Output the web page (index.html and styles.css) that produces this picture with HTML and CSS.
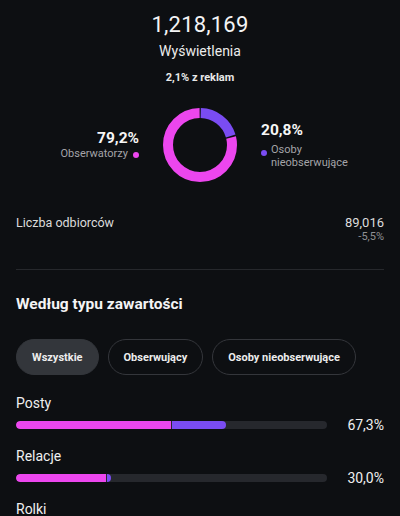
FILE: index.html
```html
<!DOCTYPE html>
<html lang="pl">
<head>
<meta charset="utf-8">
<link rel="stylesheet" href="styles.css">
</head>
<body>
<main class="page">
  <section class="summary">
    <div class="total">1,218,169</div>
    <div class="total-label">Wyświetlenia</div>
    <div class="ads">2,1% z reklam</div>
  </section>

  <section class="donut-row">
    <div class="legend legend-left">
      <div class="pct">79,2%</div>
      <div class="legend-line"><span>Obserwatorzy</span><i class="dot dot-pink"></i></div>
    </div>
    <svg class="donut" width="74" height="74" viewBox="0 0 74 74">
      <g transform="rotate(-90 37 37)">
        <circle cx="37" cy="37" r="32" fill="none" stroke="#7a4cf2" stroke-width="10" stroke-dasharray="40.3 300" stroke-dashoffset="-0.75"/>
        <circle cx="37" cy="37" r="32" fill="none" stroke="#ec46ee" stroke-width="10" stroke-dasharray="157.8 300" stroke-dashoffset="-42.55"/>
      </g>
    </svg>
    <div class="legend legend-right">
      <div class="pct">20,8%</div>
      <div class="legend-line legend-line-right"><i class="dot dot-purple"></i><span>Osoby<br>nieobserwujące</span></div>
    </div>
  </section>

  <section class="audience">
    <div class="audience-label">Liczba odbiorców</div>
    <div class="audience-values">
      <div class="audience-num">89,016</div>
      <div class="audience-change">-5,5%</div>
    </div>
  </section>

  <hr class="divider">

  <h2 class="heading">Według typu zawartości</h2>

  <div class="pills">
    <button class="pill pill-active">Wszystkie</button>
    <button class="pill">Obserwujący</button>
    <button class="pill">Osoby nieobserwujące</button>
  </div>

  <div class="metric">
    <div class="metric-label">Posty</div>
    <div class="metric-row">
      <div class="track">
        <span class="seg seg-pink" style="width:49.8%"></span>
        <span class="seg seg-purple" style="width:17.5%"></span>
      </div>
      <div class="metric-pct">67,3%</div>
    </div>
  </div>

  <div class="metric">
    <div class="metric-label">Relacje</div>
    <div class="metric-row">
      <div class="track">
        <span class="seg seg-pink" style="width:29%"></span>
        <span class="seg seg-purple" style="width:1.2%"></span>
      </div>
      <div class="metric-pct">30,0%</div>
    </div>
  </div>

  <div class="metric">
    <div class="metric-label">Rolki</div>
  </div>
</main>
</body>
</html>
```

FILE: styles.css
```css
* { box-sizing: border-box; }
html, body {
  margin: 0;
  padding: 0;
  background: #0d0f12;
  height: 100%;
  overflow: hidden;
}
body {
  font-family: Roboto, "Noto Sans", "Liberation Sans", sans-serif;
  color: #f4f4f5;
}
.page {
  padding: 0 16px;
}
.summary {
  display: flex;
  flex-direction: column;
  align-items: center;
  padding-top: 10px;
}
.total {
  font-size: 22px;
  line-height: 30px;
  font-weight: 400;
  letter-spacing: 0.2px;
}
.total-label {
  margin-top: 2px;
  font-size: 14px;
  line-height: 18px;
  color: #ececec;
}
.ads {
  margin-top: 10px;
  font-size: 11px;
  line-height: 16px;
  font-weight: 700;
  color: #e8e8e8;
}
.donut-row {
  margin-top: 22px;
  display: flex;
  justify-content: center;
  align-items: center;
  gap: 24px;
}
.donut { display: block; flex: none; }
.legend {
  width: 116px;
  display: flex;
  flex-direction: column;
}
.legend-left { align-items: flex-end; }
.legend-right { align-items: flex-start; }
.pct {
  font-size: 15.5px;
  line-height: 18px;
  font-weight: 700;
  color: #f6f6f6;
}
.legend-line {
  display: flex;
  align-items: center;
  gap: 5px;
  font-size: 11px;
  line-height: 12.5px;
  color: #a4a4a8;
  margin-top: 1px;
  white-space: nowrap;
}
.legend-line-right {
  align-items: flex-start;
  gap: 4px;
  margin-top: 5px;
}
.legend-line-right .dot { margin-top: 6px; }
.dot {
  display: block;
  width: 6px;
  height: 6px;
  border-radius: 50%;
  flex: none;
}
.dot-pink { background: #ec46ee; }
.dot-purple { background: #7a4cf2; }
.audience {
  margin-top: 33px;
  display: flex;
  justify-content: space-between;
  align-items: flex-start;
}
.audience-label {
  font-size: 12.5px;
  line-height: 16px;
  color: #dcdcdc;
}
.audience-values { text-align: right; }
.audience-num {
  font-size: 13px;
  line-height: 16px;
  color: #dcdcdc;
}
.audience-change {
  font-size: 11px;
  line-height: 12px;
  color: #8f8f93;
}
.divider {
  margin: 26px 0 0;
  border: 0;
  border-top: 1px solid #26282c;
}
.heading {
  margin: 24px 0 0;
  font-size: 15.5px;
  line-height: 20px;
  font-weight: 700;
  color: #f4f4f5;
}
.pills {
  margin-top: 25px;
  display: flex;
  gap: 9px;
}
.pill {
  flex: none;
  height: 36px;
  padding: 0 15px;
  border-radius: 18px;
  border: 1px solid #34363b;
  background: transparent;
  color: #ececec;
  font-family: inherit;
  font-size: 11px;
  font-weight: 700;
  white-space: nowrap;
}
.pill-active {
  background: #33363b;
  border-color: #33363b;
}
.metric { margin-top: 13px; }
.pills + .metric { margin-top: 19px; }
.metric-label {
  font-size: 14px;
  line-height: 18px;
  color: #f0f0f0;
}
.metric-row {
  margin-top: 4px;
  height: 18px;
  display: flex;
  align-items: center;
}
.track {
  width: 311px;
  height: 8px;
  border-radius: 4px;
  background: #26282d;
  display: flex;
  gap: 1px;
  overflow: hidden;
}
.seg { display: block; height: 100%; }
.seg-pink { background: #ec46ee; border-radius: 4px 0 0 4px; }
.seg-purple { background: #7a4cf2; border-radius: 0 4px 4px 0; }
.metric-pct {
  flex: 1;
  text-align: right;
  font-size: 14px;
  line-height: 18px;
  color: #f0f0f0;
}
```
